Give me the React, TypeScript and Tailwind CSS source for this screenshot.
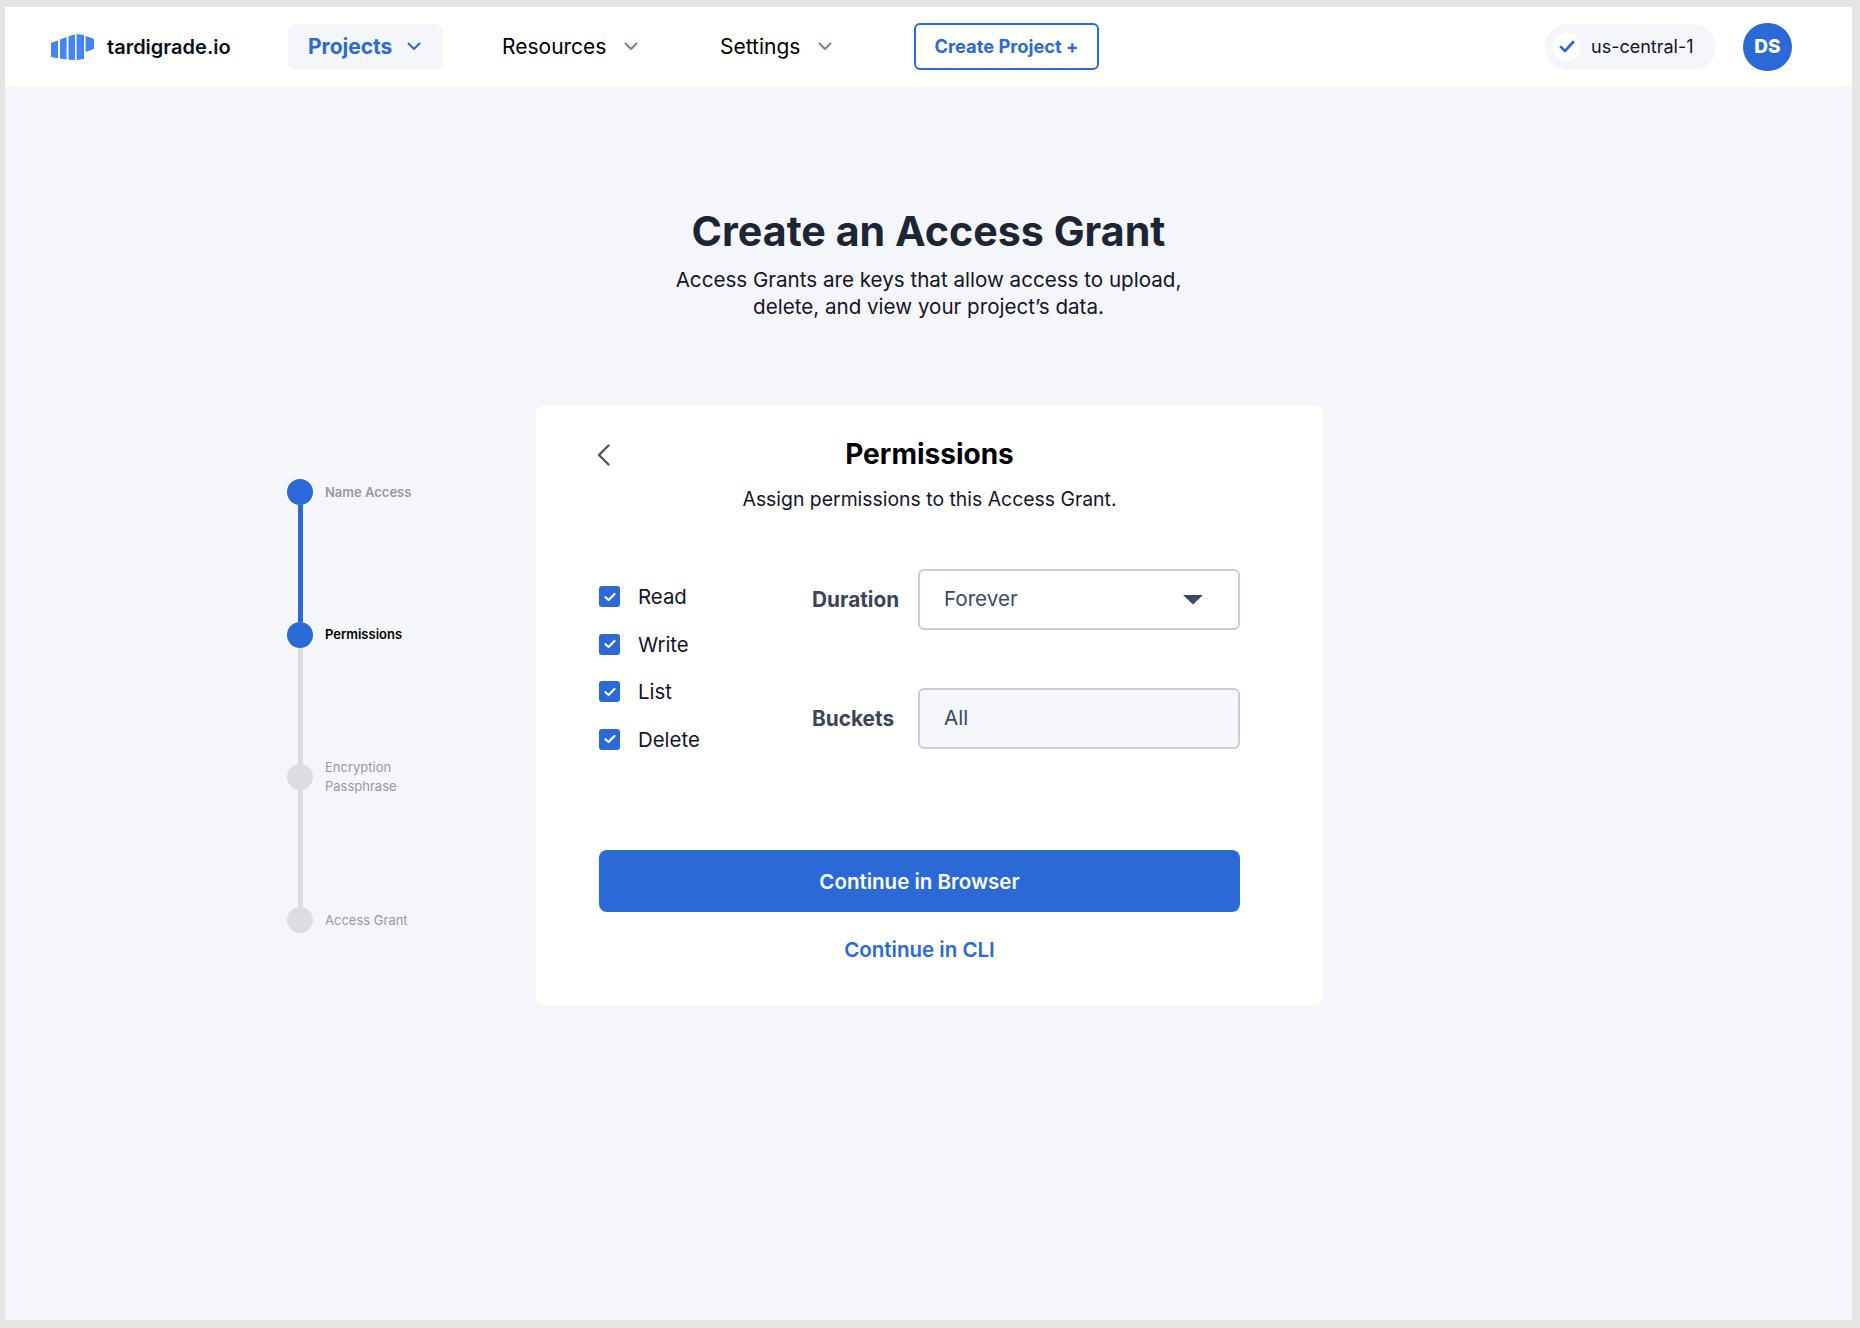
import { FC } from 'react';
import clsx from 'clsx';

const Chevron: FC<{ className?: string }> = ({ className }) => (
  <svg width="14" height="9" viewBox="0 0 14 9" fill="none" className={className}>
    <path d="M1.5 1.5L7 7L12.5 1.5" stroke="currentColor" strokeWidth="2" strokeLinecap="round" strokeLinejoin="round" />
  </svg>
);

const Logo: FC = () => (
  <svg width="43" height="26" viewBox="0 0 43 26" className="shrink-0">
    <path fill="#4285F4" d="M0 9.5Q0 9 .5 8.8L7 6.5V24.2L1 23.2Q0 23 0 22Z" />
    <path fill="#4285F4" d="M9 5.6 15.6 3V25.6L9 24.6Z" />
    <path fill="#4285F4" d="M17.5 2.2 24 .6V26L17.5 25.8Z" />
    <path fill="#4285F4" d="M25.6 0 33 1V25L25.6 26Z" />
    <path fill="#4285F4" d="M34.6 2 42 4.6Q43 5 43 6V14Q43 15 42 15.2L34.6 18Z" />
  </svg>
);

const NavLink: FC<{ label: string; className?: string }> = ({ label, className }) => (
  <div className={clsx('flex items-center gap-[18px] text-[21px] text-black', className)}>
    {label}
    <Chevron className="text-[#768394]" />
  </div>
);

const steps = [
  { label: 'Name Access', dot: 'bg-[#2b6ad6]', text: 'font-semibold text-[#98999e]', line: 'bg-[#2b6ad6]' },
  { label: 'Permissions', dot: 'bg-[#2b6ad6]', text: 'font-semibold text-black', line: 'bg-[#dcdde1]' },
  { label: 'Encryption Passphrase', dot: 'bg-[#dcdde1]', text: 'text-[#98999e]', line: 'bg-[#dcdde1]' },
  { label: 'Access Grant', dot: 'bg-[#dcdde1]', text: 'text-[#98999e]' },
];

const Stepper: FC = () => (
  <div className="flex flex-col w-[249px] pt-[73px] shrink-0">
    {steps.map((step) => (
      <div key={step.label} className="flex gap-[12px]">
        <div className="flex flex-col items-center w-[26px]">
          <div className={clsx('w-[26px] h-[26px] rounded-full', step.dot)} />
          {step.line && <div className={clsx('w-[5px] h-[116.7px]', step.line)} />}
        </div>
        <div className={clsx('h-[26px] w-[90px] flex items-center text-[13px] leading-[19px]', step.text)}>
          {step.label}
        </div>
      </div>
    ))}
  </div>
);

const Permission: FC<{ label: string }> = ({ label }) => (
  <div className="flex items-center h-[21px] gap-[18px]">
    <div className="w-[21px] h-[21px] rounded-[3px] bg-[#2b6ad6] flex items-center justify-center">
      <svg width="12" height="10" viewBox="0 0 12 10" fill="none">
        <path d="M1.5 5.2L4.6 8L10.5 2" stroke="white" strokeWidth="2.2" strokeLinecap="round" strokeLinejoin="round" />
      </svg>
    </div>
    <span className="mt-[2px] text-[20.4px] text-[#14142a]">{label}</span>
  </div>
);

const Field: FC<{ label: string; value: string; filled?: boolean; caret?: boolean }> = ({ label, value, filled, caret }) => (
  <div className="flex items-center">
    <div className="w-[106px] text-[20.8px] font-bold text-[#3a4556]">{label}</div>
    <div
      className={clsx(
        'flex-1 h-[61px] flex items-center justify-between pl-[24px] pr-[35px] rounded-[6px] border-2 border-[#c8ccd8] text-[20.6px] text-[#384b65]',
        filled ? 'bg-[#f5f6fa]' : 'bg-white'
      )}
    >
      {value}
      {caret && (
        <svg width="20" height="10" viewBox="0 0 20 10">
          <path d="M0 0H20L10 9.5Z" fill="#384b65" />
        </svg>
      )}
    </div>
  </div>
);

export default function App() {
  return (
    <div className="min-h-[1328px] bg-[#e5e5e5] pt-[7px] pb-[8px] pl-[5px] pr-[8px] font-['Inter',sans-serif]">
      <div className="h-[1313px] flex flex-col bg-[#f5f6fa]">
        <header className="h-[79px] shrink-0 bg-white flex items-center pl-[46px] pr-[60px]">
          <div className="flex items-center gap-[13px] w-[237px]">
            <Logo />
            <span className="text-[20px] font-semibold text-[#0d0f1c]">tardigrade.io</span>
          </div>
          <div className="flex items-center gap-[15px] h-[46px] w-[155px] pl-[20px] rounded-[8px] bg-[#f5f6fa] text-[21px] font-bold text-[#2b6ad6]">
            Projects
            <Chevron />
          </div>
          <NavLink label="Resources" className="ml-[59px] w-[218px]" />
          <NavLink label="Settings" className="w-[194px]" />
          <button className="w-[185px] h-[47px] rounded-[6px] border-2 border-[#2b6ad6] bg-white text-[18.3px] font-bold text-[#2b6ad6]">
            Create Project +
          </button>
          <div className="ml-auto flex items-center h-[46px] w-[171px] pl-[8px] rounded-full bg-[#f5f6fa]">
            <div className="w-[28px] h-[28px] rounded-full bg-white flex items-center justify-center">
              <svg width="16" height="13" viewBox="0 0 16 13" fill="none">
                <path d="M1.8 6.8L6 11L14.2 2" stroke="#2b6ad6" strokeWidth="2.6" strokeLinecap="round" strokeLinejoin="round" />
              </svg>
            </div>
            <span className="ml-[10px] text-[18px] text-[#14142a]">us-central-1</span>
          </div>
          <div className="ml-[27px] w-[49px] h-[48px] pt-[2px] rounded-full bg-[#2b6ad6] flex items-center justify-center text-[19px] font-extrabold text-white">
            DS
          </div>
        </header>

        <h1 className="mt-[121px] text-center text-[41.2px] leading-[48px] font-bold text-[#1b2533]">
          Create an Access Grant
        </h1>
        <p className="mt-[11px] text-center text-[20.6px] leading-[27px] text-[#14142a]">
          Access Grants are keys that allow access to upload,
          <br />
          delete, and view your project’s data.
        </p>

        <div className="mt-[86px] pl-[282px] flex items-start">
          <Stepper />
          <div className="w-[787px] h-[599px] rounded-[8px] bg-white pt-[31px]">
            <div className="grid grid-cols-[1fr_auto_1fr] items-center px-[63px]">
              <svg width="13" height="22" viewBox="0 0 13 22" fill="none" className="mt-[2px] -ml-[2px]">
                <path d="M11.5 1.5L2 11L11.5 20.5" stroke="#4a5568" strokeWidth="2.4" strokeLinecap="round" strokeLinejoin="round" />
              </svg>
              <h2 className="text-[28px] leading-[34px] font-bold text-black">Permissions</h2>
            </div>
            <p className="mt-[16px] text-center text-[19.4px] leading-[24px] text-[#14142a]">
              Assign permissions to this Access Grant.
            </p>
            <div className="mt-[58px] pl-[63px] pr-[83px]">
              <div className="flex">
                <div className="w-[213px] shrink-0 pt-[17px] flex flex-col gap-[26.5px]">
                  <Permission label="Read" />
                  <Permission label="Write" />
                  <Permission label="List" />
                  <Permission label="Delete" />
                </div>
                <div className="flex-1 flex flex-col gap-[58px]">
                  <Field label="Duration" value="Forever" caret />
                  <Field label="Buckets" value="All" filled />
                </div>
              </div>
              <button className="mt-[100px] w-full h-[62px] pt-[3px] rounded-[8px] bg-[#2b6ad6] text-[20.5px] font-semibold text-white">
                Continue in Browser
              </button>
              <div className="mt-[26px] text-center text-[20.5px] leading-[24px] font-semibold text-[#2b6ad6]">
                Continue in CLI
              </div>
            </div>
          </div>
        </div>
      </div>
    </div>
  );
}
